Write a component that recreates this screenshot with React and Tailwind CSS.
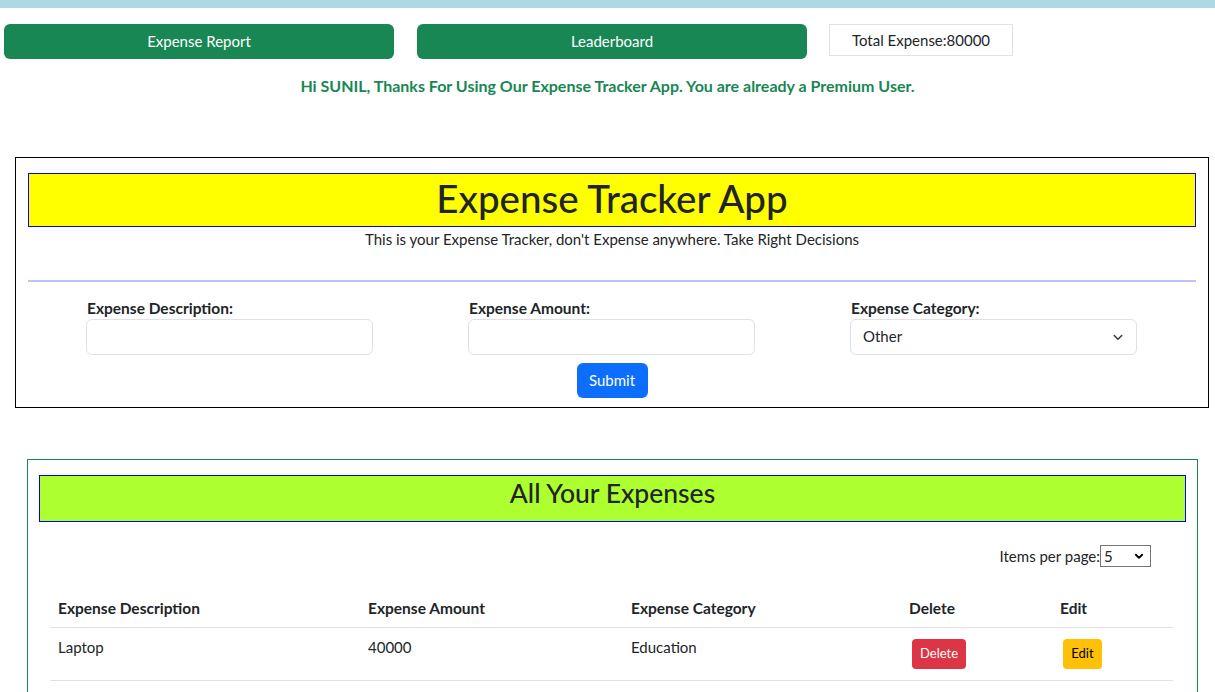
import React from "react";

export default function App() {
  return (
    <div className="w-[1215px] h-[692px] overflow-hidden bg-white text-[#212529] font-['Lato','Noto_Sans',sans-serif]">
      <div className="h-2 bg-[#add8e6]" />
      <div className="flex items-start pl-1 pt-4">
        <button className="w-[390px] h-[35px] rounded-md bg-[#198754] text-white text-[15px]">Expense Report</button>
        <button className="ml-[23px] w-[390px] h-[35px] rounded-md bg-[#198754] text-white text-[15px]">Leaderboard</button>
        <div className="ml-[22px] w-[184px] h-[32px] border border-[#dee2e6] flex items-center justify-center text-[15px]">Total Expense:80000</div>
      </div>
      <div className="mt-[15px] text-center text-[16px] font-bold text-[#198754]">
        Hi SUNIL, Thanks For Using Our Expense Tracker App. You are already a Premium User.
      </div>

      <div className="ml-[15px] mt-[59px] w-[1194px] h-[251px] border border-black px-3 pt-[15px]">
        <div className="h-[54px] border border-[#0000ff] bg-[#ffff00] flex items-center justify-center text-[38.5px] leading-none font-medium pb-[3px]">
          Expense Tracker App
        </div>
        <div className="mt-[1px] text-center text-[15px]">This is your Expense Tracker, don't Expense anywhere. Take Right Decisions</div>
        <div className="mt-[29px] h-[2px] bg-[#c0c0ff]" />
        <div className="mt-[17px] flex gap-[95px] pl-[58px]">
          {["Expense Description:", "Expense Amount:"].map((l) => (
            <div key={l} className="flex flex-col">
              <label className="text-[15.5px] font-bold leading-[18px] pl-[1px]">{l}</label>
              <input className="mt-[2px] w-[287px] h-[36px] rounded-md border border-[#dee2e6]" />
            </div>
          ))}
          <div className="flex flex-col">
            <label className="text-[15.5px] font-bold leading-[18px] pl-[1px]">Expense Category:</label>
            <div className="mt-[2px] w-[287px] h-[36px] rounded-md border border-[#dee2e6] flex items-center justify-between px-3 text-[15px]">
              <span>Other</span>
              <svg width="12" height="12" viewBox="0 0 16 16" fill="none" stroke="#343a40" strokeWidth="2" strokeLinecap="round" strokeLinejoin="round">
                <path d="M3 6l5 5 5-5" />
              </svg>
            </div>
          </div>
        </div>
        <div className="mt-[8px] flex justify-center">
          <button className="w-[71px] h-[35px] rounded-md bg-[#0d6efd] text-white text-[15px]">Submit</button>
        </div>
      </div>

      <div className="ml-[27px] mt-[51px] w-[1171px] h-[300px] border border-[#198754] px-[11px] pt-[15px]">
        <div className="h-[47px] border border-[#0000ff] bg-[#adff2f] flex items-center justify-center text-[26.5px] font-medium pb-[10px]">
          All Your Expenses
        </div>
        <div className="mt-[23px] flex justify-end items-center pr-[35px] text-[15px]">
          <span>Items per page:</span>
          <div className="w-[51px] h-[22px] border border-[#767676] flex items-center justify-between pl-[3px] pr-[6px]">
            <span className="text-[15px]">5</span>
            <svg width="10" height="10" viewBox="0 0 16 16" fill="none" stroke="#000" strokeWidth="3" strokeLinecap="round" strokeLinejoin="round">
              <path d="M3 6l5 5 5-5" />
            </svg>
          </div>
        </div>
        <table className="mt-[22px] ml-[11px] w-[1123px] text-[15px] border-collapse">
          <thead>
            <tr className="border-b border-[#dee2e6] h-[38px]">
              <th className="w-[310px] text-left font-bold px-2 text-[15.5px]">Expense Description</th>
              <th className="w-[263px] text-left font-bold px-2 text-[15.5px]">Expense Amount</th>
              <th className="w-[278px] text-left font-bold px-2 text-[15.5px]">Expense Category</th>
              <th className="w-[151px] text-left font-bold px-2 text-[15.5px]">Delete</th>
              <th className="text-left font-bold px-2 text-[15.5px]">Edit</th>
            </tr>
          </thead>
          <tbody>
            {[["Laptop", "40000", "Education"], ["", "", ""]].map((r, i) => (
              <tr key={i} className="border-b border-[#dee2e6] h-[53px] align-top">
                <td className="px-2 pt-[8px]">{r[0]}</td>
                <td className="px-2 pt-[8px]">{r[1]}</td>
                <td className="px-2 pt-[8px]">{r[2]}</td>
                <td className="px-2 pt-[11px]">
                  <button className="ml-[3px] w-[54px] h-[30px] rounded bg-[#dc3545] text-white text-[13px]">Delete</button>
                </td>
                <td className="px-2 pt-[11px]">
                  <button className="ml-[3px] w-[39px] h-[30px] rounded bg-[#ffc107] text-black text-[13px]">Edit</button>
                </td>
              </tr>
            ))}
          </tbody>
        </table>
      </div>
    </div>
  );
}
